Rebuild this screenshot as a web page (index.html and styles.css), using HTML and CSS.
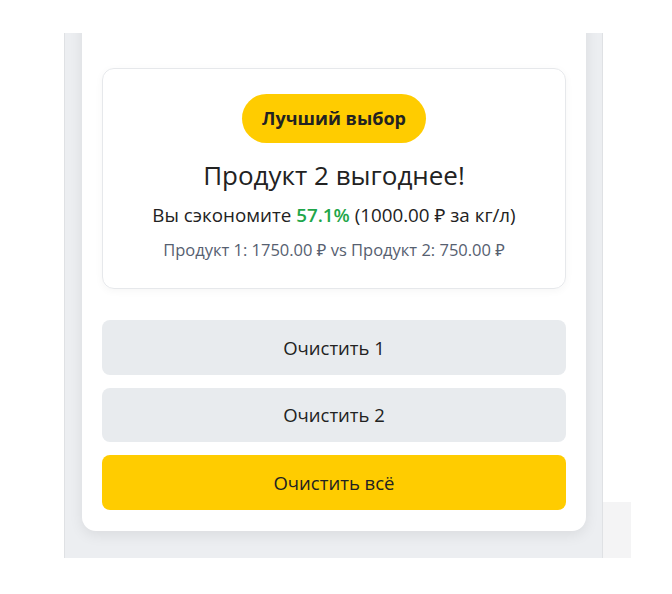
FILE: index.html
```html
<!DOCTYPE html>
<html lang="ru">
<head>
  <meta charset="UTF-8" />
  <title>Сравнение цен</title>
  <link rel="stylesheet" href="styles.css">
</head>
<body>
  <div class="page">
    <div class="frame">
      <div class="card">
        <div class="result">
          <span class="badge">Лучший выбор</span>
          <h2 class="result-title">Продукт 2 выгоднее!</h2>
          <p class="result-saving">Вы сэкономите <b class="percent">57.1%</b> (1000.00 ₽ за кг/л)</p>
          <p class="result-compare">Продукт 1: 1750.00 ₽ vs Продукт 2: 750.00 ₽</p>
        </div>

        <div class="actions">
          <button class="btn">Очистить 1</button>
          <button class="btn">Очистить 2</button>
          <button class="btn btn-primary">Очистить всё</button>
        </div>
      </div>
    </div>
    <div class="side-box"></div>
  </div>
</body>
</html>
```

FILE: styles.css
```css
body {
  font-family: "Open Sans", "Noto Sans", sans-serif;
  background: #ffffff;
  color: #222;
  margin: 0;
}

.page {
  display: flex;
  align-items: flex-end;
  margin: 33px 0 0 64px;
}

.frame {
  width: 504px;
  height: 525px;
  padding: 0 16px 0 17px;
  background: #eceef1;
  border-left: 1px solid #dfe1e4;
  border-right: 1px solid #dfe1e4;
}

.side-box {
  width: 28px;
  height: 56px;
  background: #f4f4f5;
}

/* top of the card is scrolled away above the frame */
.card {
  margin-top: -80px;
  padding: 115px 20px 21px;
  background: #fff;
  border-radius: 0 0 14px 14px;
  box-shadow: 0 4px 14px rgba(0,0,0,0.08);
  clip-path: inset(80px -30px -30px -30px);
}

.result {
  display: flex;
  flex-direction: column;
  align-items: center;
  padding: 25px 20px 27px;
  border: 1px solid #e6e8eb;
  border-radius: 12px;
  box-shadow: 0 2px 8px rgba(0,0,0,0.04);
  text-align: center;
}

.badge {
  background: #ffcc00;
  color: #222;
  font-weight: 700;
  font-size: 18px;
  line-height: 25px;
  padding: 12px 20px;
  border-radius: 999px;
}

.result-title {
  margin: 15px 0 0;
  font-size: 26px;
  font-weight: 400;
  line-height: 34px;
}

.result-saving {
  margin: 10px 0 0;
  font-size: 18.8px;
  line-height: 26px;
}

.percent {
  color: #1fa64a;
  font-weight: 600;
}

.result-compare {
  margin: 11px 0 0;
  font-size: 16.5px;
  line-height: 22px;
  color: #566070;
}

.actions {
  display: flex;
  flex-direction: column;
  gap: 13px;
  margin-top: 31px;
}

.btn {
  height: 54.5px;
  border: none;
  border-radius: 8px;
  background: #e8ebee;
  color: #222;
  font-family: inherit;
  font-size: 18.5px;
  cursor: pointer;
}

.btn-primary {
  background: #ffcc00;
}
```
